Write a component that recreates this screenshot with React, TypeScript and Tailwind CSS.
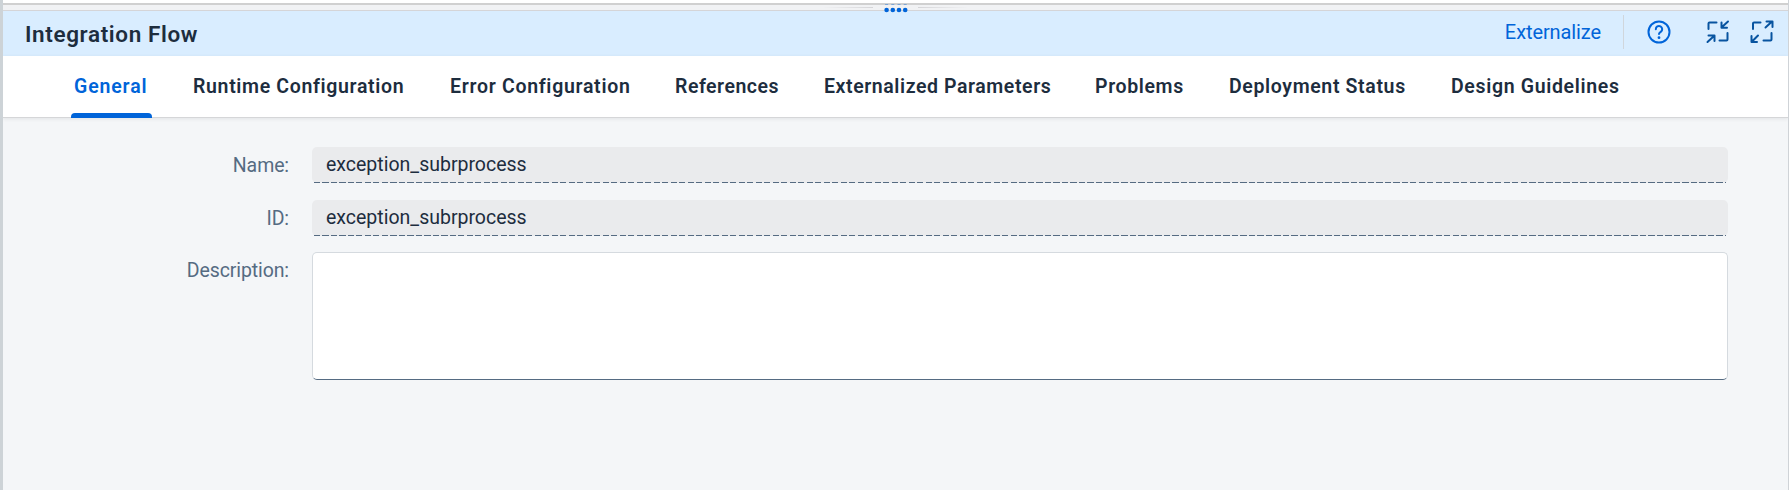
const tabs = [
  { label: "General", cls: "w-[74px] tracking-[0.86px]", active: true },
  { label: "Runtime Configuration", cls: "w-[212px] tracking-[0.66px]" },
  { label: "Error Configuration", cls: "w-[180px] tracking-[0.71px]" },
  { label: "References", cls: "w-[104px] tracking-[0.5px]" },
  { label: "Externalized Parameters", cls: "w-[226px] tracking-[0.58px]" },
  { label: "Problems", cls: "w-[89px] tracking-[0.63px]" },
  { label: "Deployment Status", cls: "w-[177px] tracking-[0.64px]" },
  { label: "Design Guidelines", cls: "w-[169px] tracking-[0.66px]" },
];

const fields = [
  { label: "Name:", value: "exception_subrprocess", cls: "mb-[17px]" },
  { label: "ID:", value: "exception_subrprocess", cls: "mb-4" },
];

function HelpIcon() {
  return (
    <svg className="h-6 w-6" viewBox="0 0 24 24" fill="none" stroke="#0064d9" strokeWidth="2" strokeLinecap="round">
      <circle cx="12" cy="12" r="10.5" />
      <path d="M8.8 9.2a3.2 3.2 0 1 1 5 2.6c-1.1.7-1.8 1.1-1.8 2.3" />
      <circle cx="12" cy="17.7" r="1.4" fill="#0064d9" stroke="none" />
    </svg>
  );
}

function CollapseIcon() {
  return (
    <svg className="h-6 w-6" viewBox="0 0 24 24" fill="none" stroke="#0854a0" strokeWidth="2" strokeLinecap="round" strokeLinejoin="round">
      <path d="M10.5 2.5H3.5Q2.5 2.5 2.5 3.5V9M21.5 13V19.5Q21.5 20.5 20.5 20.5H13.5M22 1.5L15.5 7.5M15.5 2.5V7.8H21M1.5 22L8 16M2.5 15.5H8.5V21" />
    </svg>
  );
}

function ExpandIcon() {
  return (
    <svg className="h-6 w-6" viewBox="0 0 24 24" fill="none" stroke="#0854a0" strokeWidth="2" strokeLinecap="round" strokeLinejoin="round">
      <path d="M10.5 2.5H4Q3 2.5 3 3.5V9M21.5 13V19.5Q21.5 20.5 20.5 20.5H13.5M22 1.5L15.5 7.5M16.5 1.5H22.5V7M8 15.5L1.8 21.8M1.5 16V22H7" />
    </svg>
  );
}

export default function App() {
  return (
    <div className="flex h-[490px] w-[1789px] flex-col overflow-hidden border-r border-l-[3px] border-r-[#cfd3d7] border-l-[#cdd3d7] bg-[#f4f6f8] font-['Roboto',sans-serif] text-[#1d2d3e]">
      <div className="relative h-[11px] shrink-0 border-b border-[#d5d5d8] bg-[#f1f2f4]">
        <div className="h-[5px] border-b-2 border-[#d0d0d0] bg-white" />
        <div className="absolute top-[7px] left-[820px] flex gap-[45px]">
          <span className="h-px w-[50px] bg-linear-to-r from-transparent to-[#d5d5d8]" />
          <span className="h-px w-[50px] bg-linear-to-l from-transparent to-[#d5d5d8]" />
        </div>
        <svg className="absolute top-[3px] left-[880px] z-10" width="28" height="10" fill="#0064d9">
          {[3.6, 9.8, 16, 22.2].map((x) => (
            <g key={x}>
              <circle cx={x} cy="7" r="2.3" />
              <rect x={x - 1.5} y="1" width="3" height="1" opacity="0.4" />
            </g>
          ))}
        </svg>
      </div>
      <header className="flex h-[45px] shrink-0 items-center bg-[#d9edff] pl-[22px]">
        <h1 className="text-[22.5px] leading-7 font-semibold tracking-[0.62px]">Integration Flow</h1>
        <div className="ml-auto flex items-center pr-[14px] pb-[3px]">
          <span className="text-[20px] leading-6 tracking-[-0.1px] text-[#0064d9]">Externalize</span>
          <span className="mr-[23px] ml-[22px] h-[34px] w-px bg-[#d0d6dc]" />
          <HelpIcon />
          <span className="w-[35px]" />
          <CollapseIcon />
          <span className="w-5" />
          <ExpandIcon />
        </div>
      </header>
      <nav className="z-10 flex h-[62px] shrink-0 gap-[45px] border-b border-[#d5d6d8] bg-white pl-[71px] shadow-[0_1px_4px_rgba(0,0,0,0.08)]">
        {tabs.map((t) => (
          <div key={t.label} className={`relative pt-[19px] text-[19.5px] leading-6 font-semibold whitespace-nowrap ${t.cls} ${t.active ? "text-[#0064d9]" : ""}`}>
            {t.label}
            {t.active && <span className="absolute -right-1 -bottom-px -left-[3px] h-[5px] rounded-t-[4px] bg-[#0064d9]" />}
          </div>
        ))}
      </nav>
      <main className="grid flex-1 grid-cols-[286px_1416px] content-start gap-x-[23px] pt-[29px] text-[19.5px] leading-6">
        {fields.map((f) => (
          <div key={f.label} className="contents">
            <div className="pt-[7px] text-right tracking-[-0.1px] text-[#556b82]">{f.label}</div>
            <div className={`flex h-9 flex-col justify-between rounded-[5px] bg-[#eaebed] ${f.cls}`}>
              <span className="px-3.5 pt-1.5">{f.value}</span>
              <span className="mx-0.5 h-px bg-[repeating-linear-gradient(90deg,#556b82_0_6px,transparent_6px_8.5px)]" />
            </div>
          </div>
        ))}
        <div className="pt-[7px] text-right tracking-[-0.1px] text-[#556b82]">Description:</div>
        <div className="h-[128px] rounded-[5px] border border-[#d5dadf] border-b-[#556b82] bg-white" />
      </main>
    </div>
  );
}
